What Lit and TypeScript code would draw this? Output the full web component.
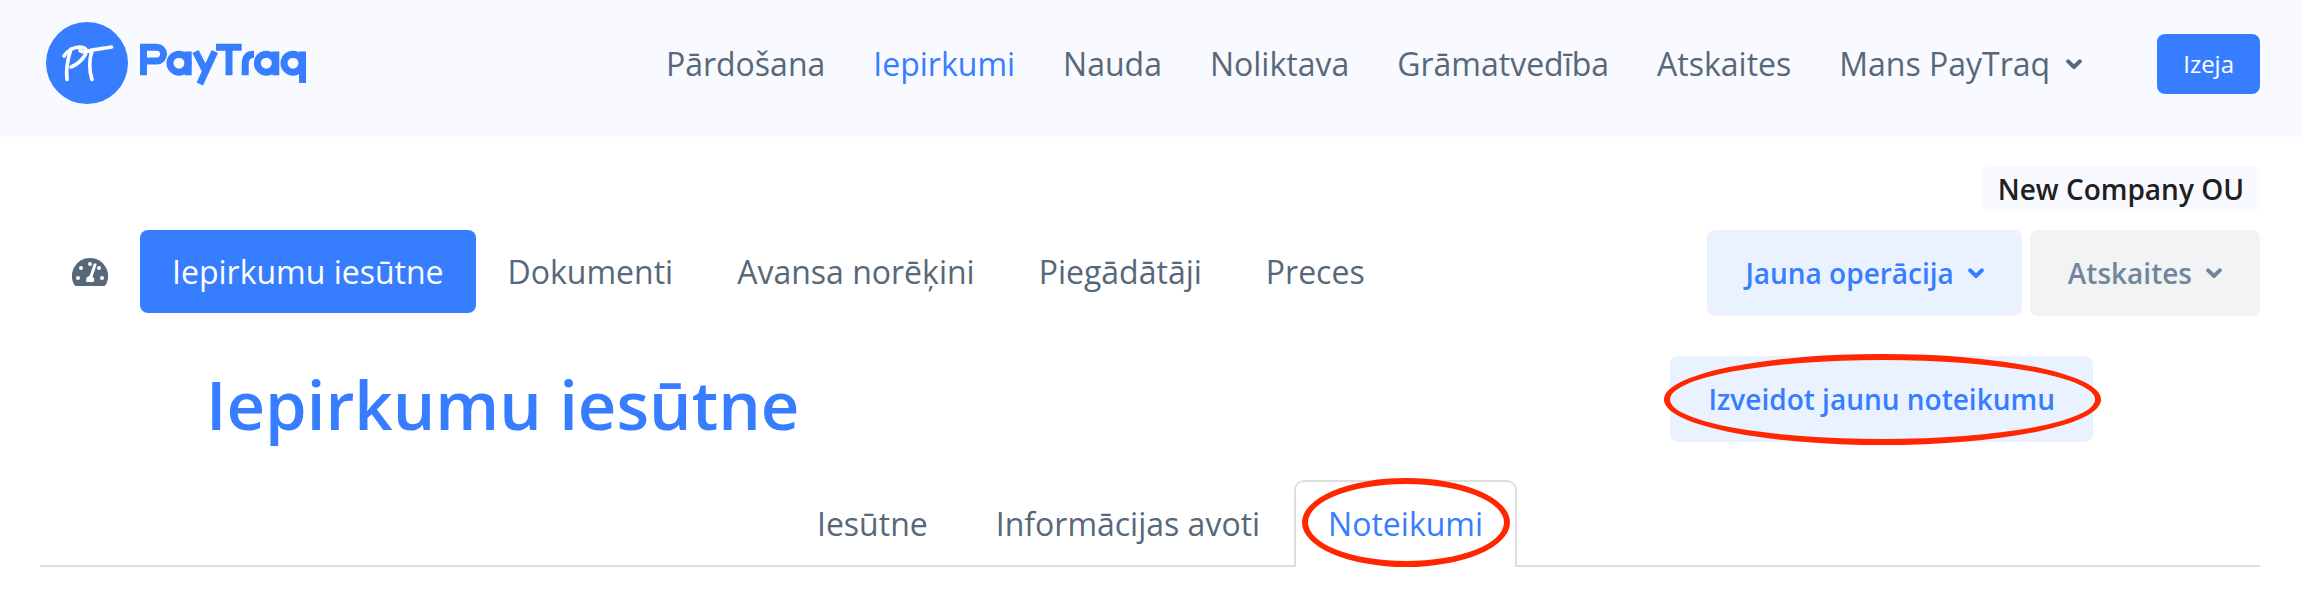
import { LitElement, html, css } from "lit";
import { customElement } from "lit/decorators.js";

const chevron = html`<svg class="chevron" viewBox="0 0 16 12" aria-hidden="true"><path d="M2.2 3.400 L8 9 L13.800 3.400" fill="none" stroke="currentColor" stroke-width="4" stroke-linecap="round" stroke-linejoin="round"/></svg>`;

@customElement("app-root")
export class AppRoot extends LitElement {
  static styles = css`
    :host {
      display: block;
      min-height: 100vh;
      background: #fff;
      color: #566879;
      font-family: "Open Sans", sans-serif;
      font-size: 32px;
      line-height: 48px;
    }
    * { box-sizing: border-box; }
    a { color: inherit; text-decoration: none; }
    button { font-family: inherit; border: 0; border-radius: 8px; cursor: pointer; }
    h1 { margin: 0; font-weight: 600; font-size: 67px; line-height: 88px; color: #377dff; }
    .header {
      display: flex;
      align-items: flex-start;
      padding: 22px 42px 31px 46px;
      background: #f8faff;
    }
    .logo { display: block; width: 264px; height: 84px; }
    .menu { display: flex; gap: 48px; margin: 18px 75px 0 auto; }
    .menu a { display: flex; align-items: center; gap: 16px; }
    .active { color: #377dff; }
    .chevron { width: 16px; height: 12px; flex: none; }
    .exit { margin-top: 12px; height: 60px; padding: 0 26px; background: #377dff; color: #fff; font-size: 24px; line-height: 36px; }
    .content { padding: 29px 42px 0 40px; }
    .company { display: flex; justify-content: flex-end; }
    .badge { padding: 4px 16px; border-radius: 8px; background: #f8faff; color: #1e2022; font-size: 28px; line-height: 38px; font-weight: 600; }
    .toolbar { display: flex; align-items: flex-start; margin-top: 18px; }
    .sections { display: flex; align-items: center; }
    .sections a { padding: 18px 32px 17px; border-radius: 8px; }
    .sections .current { background: #377dff; color: #fff; }
    .sections .home { display: flex; padding: 0 32px; }
    .gauge { width: 36px; height: 28px; }
    .actions { display: flex; gap: 8px; margin-left: auto; }
    .action {
      display: flex; align-items: center; gap: 14px;
      height: 86px; padding: 0 38px;
      background: #ebf2ff; color: #377dff;
      font-size: 28px; line-height: 42px; font-weight: 600;
    }
    .muted { background: #f1f3f5; color: #71869d; }
    .title { display: flex; justify-content: space-between; align-items: flex-start; padding: 0 167px 0 166px; margin-top: 40px; }
    .title h1 { padding-top: 4px; }
    .marked { position: relative; }
    .ring { position: absolute; border: 6px solid #ff2600; border-radius: 50%; pointer-events: none; }
    .ring-action { inset: -2px -8px -3px -6px; }
    .ring-tab { inset: -4px 5px 0 6px; }
    .tabs { display: flex; justify-content: center; margin-top: 32px; border-bottom: 2px solid #dcdee0; }
    .tab { padding: 18px 32px 19px; margin-bottom: -2px; border: 2px solid transparent; border-bottom: 0; border-radius: 10px 10px 0 0; }
    .selected { border-color: #dcdee0; background: #fff; color: #377dff; }
  `;

  render() {
    return html`
      <header class="header">
        <a href="#" aria-label="PayTraq">
          <svg class="logo" viewBox="0 0 264 84" aria-hidden="true">
            <circle cx="41" cy="41" r="41" fill="#377dff"/>
            <path fill="none" stroke="#fff" stroke-width="3.600" stroke-linecap="round" stroke-linejoin="round"
              d="M25 27C22 36 20 49 21 57.500M18 34C22 28 27 25.500 33 25C42 25 42 30 37 36C33 41 29 43.500 25 45M34 28.500C37 31 41 30 46 28C53 27 59 26 65.500 25M46 29C43 37 43 49 46 57.500"/>
            <g fill="none" stroke="#377dff" stroke-width="7">
              <path d="M97.500 53.300V25.200H110.700a6.900 6.900 0 0 1 0 13.800H97.500"/>
              <circle cx="133" cy="41.200" r="9"/><path d="M142.200 29.500V53.300"/>
              <path d="M149.500 29.500L159.500 49M168.800 29.500L153.800 62"/>
              <path d="M170 25.200H195.700M183 25V53.300"/>
              <path d="M199.200 53.300V42c0-6.500 3-9.800 8.800-9.800"/>
              <circle cx="220.300" cy="41.200" r="9"/><path d="M229.800 29.500V53.300"/>
              <circle cx="247" cy="41.200" r="9"/><path d="M256.500 29.500V61"/>
            </g>
          </svg>
        </a>
        <nav class="menu">
          <a href="#">Pārdošana</a>
          <a href="#" class="active">Iepirkumi</a>
          <a href="#">Nauda</a>
          <a href="#">Noliktava</a>
          <a href="#">Grāmatvedība</a>
          <a href="#">Atskaites</a>
          <a href="#">Mans PayTraq ${chevron}</a>
        </nav>
        <button class="exit">Izeja</button>
      </header>
      <main class="content">
        <div class="company"><span class="badge">New Company OU</span></div>
        <div class="toolbar">
          <nav class="sections">
            <a href="#" class="home" aria-label="Sākums">
              <svg class="gauge" viewBox="0 0 36 28" aria-hidden="true">
                <path fill="#566879" d="M18 0A18 18 0 0 0 2.400 27q.6 1 1.700 1H31.900q1.100 0 1.700-1A18 18 0 0 0 18 0Z"/>
                <g fill="#fff"><circle cx="18" cy="6" r="2"/><circle cx="9" cy="10" r="2"/><circle cx="27" cy="10" r="2"/><circle cx="6" cy="20" r="2"/><circle cx="30" cy="20" r="2"/><path d="M14.500 24C13 20.500 15.500 18 18 18C21 18 23.500 20.500 21.500 24Z"/></g>
                <path d="M18.500 20L23 6.800" stroke="#fff" stroke-width="3" stroke-linecap="round"/>
              </svg>
            </a>
            <a href="#" class="current">Iepirkumu iesūtne</a>
            <a href="#">Dokumenti</a>
            <a href="#">Avansa norēķini</a>
            <a href="#">Piegādātāji</a>
            <a href="#">Preces</a>
          </nav>
          <div class="actions">
            <button class="action">Jauna operācija ${chevron}</button>
            <button class="action muted">Atskaites ${chevron}</button>
          </div>
        </div>
        <div class="title">
          <h1>Iepirkumu iesūtne</h1>
          <button class="action marked">Izveidot jaunu noteikumu<span class="ring ring-action"></span></button>
        </div>
        <nav class="tabs">
          <a href="#" class="tab">Iesūtne</a>
          <a href="#" class="tab">Informācijas avoti</a>
          <a href="#" class="tab selected marked">Noteikumi<span class="ring ring-tab"></span></a>
        </nav>
      </main>
    `;
  }
}
